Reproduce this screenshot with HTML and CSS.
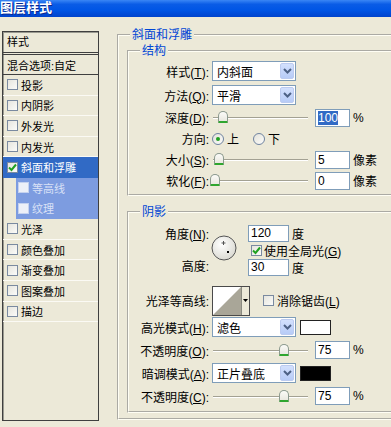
FILE: index.html
```html
<!DOCTYPE html>
<html lang="zh-CN">
    <head>
        <title>图层样式</title>
        <meta charset="UTF-8">
        <link rel="stylesheet" href="styles.css">
    </head>

    <body>
        <div class="titlebar"><span>图层样式</span></div>

        <div class="main">
            <!-- left: list of effects -->
            <div class="style-list">
                <div class="list-head">样式</div>
                <div class="list-item blend">混合选项:自定</div>
                <div class="list-item"><span class="cb"></span>投影</div>
                <div class="list-item"><span class="cb"></span>内阴影</div>
                <div class="list-item"><span class="cb"></span>外发光</div>
                <div class="list-item"><span class="cb"></span>内发光</div>
                <div class="list-item selected">
                    <span class="cb"><svg width="9" height="9" viewBox="0 0 9 9"><path d="M1 4.5 L3.5 7 L8 1.5" fill="none" stroke="#21a121" stroke-width="2"/></svg></span>斜面和浮雕
                </div>
                <div class="list-item sub"><span class="cb"></span>等高线</div>
                <div class="list-item sub"><span class="cb"></span>纹理</div>
                <div class="list-item"><span class="cb"></span>光泽</div>
                <div class="list-item"><span class="cb"></span>颜色叠加</div>
                <div class="list-item"><span class="cb"></span>渐变叠加</div>
                <div class="list-item"><span class="cb"></span>图案叠加</div>
                <div class="list-item"><span class="cb"></span>描边</div>
            </div>

            <!-- right: settings -->
            <div class="settings">
                <fieldset class="group outer">
                    <legend>斜面和浮雕</legend>

                    <fieldset class="group structure">
                        <legend>结构</legend>

                        <div class="row tall">
                            <label>样式(<u>T</u>):</label>
                            <div class="combo"><span>内斜面</span><i class="drop"><svg width="9" height="6" viewBox="0 0 9 6"><path d="M1 1 L4.5 4.5 L8 1" fill="none" stroke="#4d6185" stroke-width="2"/></svg></i></div>
                        </div>
                        <div class="row tall">
                            <label>方法(<u>Q</u>):</label>
                            <div class="combo"><span>平滑</span><i class="drop"><svg width="9" height="6" viewBox="0 0 9 6"><path d="M1 1 L4.5 4.5 L8 1" fill="none" stroke="#4d6185" stroke-width="2"/></svg></i></div>
                        </div>
                        <div class="row">
                            <label>深度(<u>D</u>):</label>
                            <div class="slider"><i class="thumb" style="left:8px"></i></div>
                            <div class="num"><span class="hl">100</span></div>
                            <span class="unit">%</span>
                        </div>
                        <div class="row">
                            <label>方向:</label>
                            <span class="radio on"></span><span class="radio-text">上</span>
                            <span class="radio"></span><span class="radio-text">下</span>
                        </div>
                        <div class="row">
                            <label>大小(<u>S</u>):</label>
                            <div class="slider"><i class="thumb" style="left:4px"></i></div>
                            <div class="num">5</div>
                            <span class="unit">像素</span>
                        </div>
                        <div class="row">
                            <label>软化(<u>F</u>):</label>
                            <div class="slider"><i class="thumb" style="left:0px"></i></div>
                            <div class="num">0</div>
                            <span class="unit">像素</span>
                        </div>
                    </fieldset>

                    <fieldset class="group shadow">
                        <legend>阴影</legend>

                        <div class="angle-block">
                            <div class="angle-labels">
                                <label>角度(<u>N</u>):</label>
                                <label>高度:</label>
                            </div>
                            <div class="dial">
                                <svg width="26" height="26" viewBox="0 0 26 26">
                                    <defs>
                                        <radialGradient id="dialfill" cx="40%" cy="35%" r="70%">
                                            <stop offset="0" stop-color="#ffffff"/>
                                            <stop offset="1" stop-color="#d9d8d0"/>
                                        </radialGradient>
                                    </defs>
                                    <circle cx="13" cy="13" r="12" fill="url(#dialfill)" stroke="#555" stroke-width="1"/>
                                    <path d="M12.5 6 V10 M10.5 8 H14.5" stroke="#555" stroke-width="1"/>
                                    <rect x="16" y="16" width="2" height="2" fill="#000"/>
                                </svg>
                            </div>
                            <div class="angle-inputs">
                                <div class="field"><div class="num wide">120</div><span class="unit">度</span></div>
                                <div class="field"><span class="cb"><svg width="9" height="9" viewBox="0 0 9 9"><path d="M1 4.5 L3.5 7 L8 1.5" fill="none" stroke="#21a121" stroke-width="2"/></svg></span><span>使用全局光(<u>G</u>)</span></div>
                                <div class="field"><div class="num wide">30</div><span class="unit">度</span></div>
                            </div>
                        </div>

                        <div class="row contour-row">
                            <label>光泽等高线:</label>
                            <div class="contour">
                                <svg width="38" height="30" viewBox="0 0 38 30">
                                    <rect x="0.5" y="0.5" width="37" height="29" fill="#fff" stroke="#4a4a4a"/>
                                    <polygon points="1,29 29,1 29,29" fill="#a9a698"/>
                                    <rect x="29" y="1" width="8" height="28" fill="#ece9d8"/>
                                    <line x1="29.5" y1="1" x2="29.5" y2="29" stroke="#8a8a80"/>
                                    <polygon points="31,13 36,13 33.5,16" fill="#000"/>
                                </svg>
                            </div>
                            <span class="cb"></span><span>消除锯齿(<u>L</u>)</span>
                        </div>

                        <div class="row tall">
                            <label>高光模式(<u>H</u>):</label>
                            <div class="combo"><span>滤色</span><i class="drop"><svg width="9" height="6" viewBox="0 0 9 6"><path d="M1 1 L4.5 4.5 L8 1" fill="none" stroke="#4d6185" stroke-width="2"/></svg></i></div>
                            <span class="swatch white"></span>
                        </div>
                        <div class="row mid">
                            <label>不透明度(<u>O</u>):</label>
                            <div class="slider"><i class="thumb" style="left:69px"></i></div>
                            <div class="num">75</div>
                            <span class="unit">%</span>
                        </div>
                        <div class="row tall">
                            <label>暗调模式(<u>A</u>):</label>
                            <div class="combo"><span>正片叠底</span><i class="drop"><svg width="9" height="6" viewBox="0 0 9 6"><path d="M1 1 L4.5 4.5 L8 1" fill="none" stroke="#4d6185" stroke-width="2"/></svg></i></div>
                            <span class="swatch black"></span>
                        </div>
                        <div class="row mid">
                            <label>不透明度(<u>C</u>):</label>
                            <div class="slider"><i class="thumb" style="left:69px"></i></div>
                            <div class="num">75</div>
                            <span class="unit">%</span>
                        </div>
                    </fieldset>
                </fieldset>
            </div>
        </div>
    </body>
</html>
```

FILE: styles.css
```css
body{
    margin: 0;
    width: 391px;
    height: 427px;
    overflow: hidden;
    background-color: #ece9d8;
    font-family: "Liberation Sans", "Noto Sans CJK SC", sans-serif;
    font-size: 12px;
    color: #000;
}

u{
    text-decoration: underline;
}

.titlebar{
    height: 17px;
    background: linear-gradient(#3a86f5 0, #0a5ce6 25%, #0055e5 60%, #0043cc 100%);
    overflow: hidden;
}

.titlebar span{
    display: block;
    margin-left: 0;
    line-height: 15px;
    font-size: 13px;
    font-weight: bold;
    color: #fff;
    text-shadow: 1px 1px 0 #0b2a8f;
}

.main{
    display: flex;
    align-items: flex-start;
}

/* effect list */

.style-list{
    flex: none;
    margin: 14px 0 0 2px;
    width: 97px;
    height: 390px;
    box-sizing: border-box;
    border: 1px solid #3f3f3f;
    box-shadow: inset 1px 1px 0 #9a9a90;
    font-size: 11px;
}

.list-head{
    height: 20px;
    line-height: 20px;
    padding-left: 4px;
    border-bottom: 3px double #3f3f3f;
}

.list-item{
    display: flex;
    align-items: center;
    height: 20.6px;
    box-sizing: border-box;
    padding-left: 4px;
    border-bottom: 1px solid #fbfaf4;
    white-space: nowrap;
}

.list-item.blend{
    height: 20px;
    border-bottom: 1px solid #3f3f3f;
}

.list-item.selected{
    background-color: #316ac5;
    color: #fff;
    border-bottom-color: #316ac5;
}

.list-item.sub{
    margin-left: 13px;
    padding-left: 2px;
    background-color: #7d9ce0;
    color: #d9e1f6;
    border-bottom-color: #7d9ce0;
}

.cb{
    display: inline-flex;
    align-items: center;
    justify-content: center;
    width: 11px;
    height: 11px;
    box-sizing: border-box;
    margin-right: 3px;
    border: 1px solid #7a8aa0;
    background: linear-gradient(135deg, #e6e5de, #fbfbf9);
    flex: none;
}

.list-item.sub .cb{
    border-color: #c5d2ef;
    background: #edf0f8;
}

/* settings */

.settings{
    flex: none;
    margin: 11px 0 0 18px;
}

.group{
    margin: 0;
    border: 2px groove #fffef4;
    padding: 0;
    min-width: 0;
}

.group legend{
    padding: 0 2px;
    line-height: 14px;
    color: #0046d5;
}

.outer{
    width: 300px;
    padding: 0 0 5px 8px;
}

.outer > legend{
    margin-left: 3px;
}

.structure,
.shadow{
    width: 280px;
}

.structure{
    margin-top: 2px;
    padding: 1px 0 3px 0;
}

.structure > legend,
.shadow > legend{
    margin-left: 11px;
}

.shadow{
    margin-top: 9px;
    padding: 0 0 4px 0;
}

.row{
    display: flex;
    align-items: center;
    height: 21px;
    white-space: nowrap;
}

.row.tall{
    height: 24px;
}

.row.mid{
    height: 22px;
}

.row > label,
.angle-labels label{
    width: 80px;
    text-align: right;
    flex: none;
}

.combo{
    display: flex;
    align-items: center;
    justify-content: space-between;
    margin-left: 3px;
    width: 84px;
    height: 20px;
    box-sizing: border-box;
    border: 1px solid #7f9db9;
    background-color: #fff;
    padding: 0 1px 0 4px;
}

.drop{
    display: flex;
    align-items: center;
    justify-content: center;
    width: 14px;
    height: 16px;
    box-sizing: border-box;
    border: 1px solid #bccbf0;
    border-radius: 2px;
    background: linear-gradient(#d3e0fd, #b7cbf7);
}

.slider{
    position: relative;
    margin-left: 1px;
    width: 98px;
    height: 13px;
}

.slider::before{
    content: "";
    position: absolute;
    left: 3px;
    right: 0;
    top: 6px;
    border-top: 1px solid #a3a193;
    border-bottom: 1px solid #fff;
}

.thumb{
    position: absolute;
    top: 0;
    width: 10px;
    height: 12px;
    background: linear-gradient(#fbfbf8, #e9e8e0);
    border: 1px solid #8c9a8f;
    border-bottom: 2px solid #2fa62f;
    border-radius: 5px 5px 1px 1px;
    box-sizing: border-box;
}

.num{
    margin-left: 7px;
    width: 35px;
    height: 18px;
    box-sizing: border-box;
    border: 1px solid #7f9db9;
    background-color: #fff;
    padding-left: 2px;
    line-height: 16px;
}

.num.wide{
    margin-left: 0;
    width: 41px;
    height: 17px;
    line-height: 15px;
}

.hl{
    background-color: #316ac5;
    color: #fff;
}

.unit{
    margin-left: 3px;
}

.radio{
    margin-left: 3px;
    width: 12px;
    height: 12px;
    box-sizing: border-box;
    border: 1px solid #6f83a0;
    border-radius: 50%;
    background: linear-gradient(135deg, #e3e2da, #fcfcfa);
    display: flex;
    align-items: center;
    justify-content: center;
}

.radio.on::after{
    content: "";
    width: 4px;
    height: 4px;
    border-radius: 50%;
    background-color: #21a121;
}

.radio-text{
    margin-left: 3px;
    margin-right: 11px;
}

/* angle + altitude */

.angle-block{
    display: flex;
    margin-top: 6px;
    height: 51px;
}

.angle-labels{
    display: flex;
    flex-direction: column;
    justify-content: space-between;
    padding-top: 2px;
}

.angle-labels label{
    line-height: 17px;
}

.dial{
    width: 39px;
    padding: 10px 0 0 2px;
    box-sizing: border-box;
}

.dial svg{
    display: block;
}

.angle-inputs{
    display: flex;
    flex-direction: column;
}

.field{
    display: flex;
    align-items: center;
    height: 17px;
    white-space: nowrap;
}

.field .cb{
    margin-left: 3px;
    margin-right: 2px;
}

.contour-row{
    margin-top: 10px;
    height: 29px;
}

.contour{
    margin-left: 3px;
    margin-right: 13px;
    height: 30px;
}

.contour svg{
    display: block;
}

.swatch{
    margin-left: 4px;
    width: 31px;
    height: 15px;
    box-sizing: border-box;
    border: 1px solid #222;
}

.swatch.white{
    background-color: #fff;
}

.swatch.black{
    background-color: #000;
}
```
